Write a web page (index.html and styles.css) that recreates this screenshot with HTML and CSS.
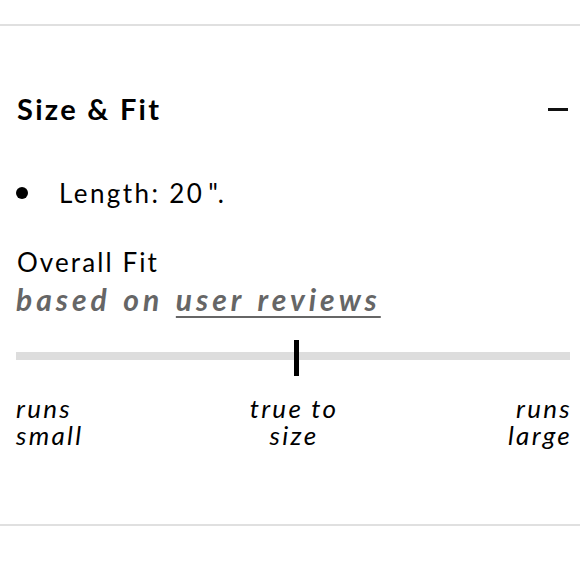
FILE: index.html
```html
<!DOCTYPE html>
<html>
<head>
<meta charset="utf-8">
<link rel="stylesheet" href="styles.css">
</head>
<body>
<div class="page">
  <section class="panel">
    <div class="header">
      <h2 class="title">Size &amp; Fit</h2>
      <span class="minus"></span>
    </div>
    <ul class="list">
      <li class="item"><span class="dot"></span><span>Length: 20<span class="q">".</span></span></li>
    </ul>
    <div class="fit">
      <div class="fit-title">Overall Fit</div>
      <div class="fit-sub">based on <span class="link">user reviews</span></div>
    </div>
    <div class="slider">
      <div class="track"></div>
      <div class="marker"></div>
    </div>
    <div class="labels">
      <div class="label left">runs<br>small</div>
      <div class="label mid">true to<br>size</div>
      <div class="label right">runs<br>large</div>
    </div>
  </section>
</div>
</body>
</html>
```
FILE: styles.css
```css
* { box-sizing: border-box; }
html, body { margin: 0; padding: 0; background: #fff; }
body { font-family: Lato, "Noto Sans", sans-serif; color: #000; }
.page { width: 580px; height: 580px; padding-top: 24px; }
.panel {
  border-top: 2px solid #e0e0e0;
  border-bottom: 2px solid #e0e0e0;
  height: 502px;
  padding: 0 10px 0 16px;
}
.header {
  display: flex;
  align-items: center;
  justify-content: space-between;
  margin-top: 65px;
  height: 36px;
}
.title { margin: 0 0 0 1px; font-size: 29px; line-height: 36px; font-weight: 700; letter-spacing: 2.3px; }
.minus { width: 20px; height: 3px; background: #111; margin-right: 2px; }
.list { list-style: none; margin: 50px 0 0; padding: 0; }
.item { display: flex; align-items: center; font-size: 26px; line-height: 32px; gap: 31px; letter-spacing: 2.4px; }
.q { margin-left: 4px; }
.dot { width: 12px; height: 12px; border-radius: 50%; background: #000; flex: none; }
.fit { margin-top: 37px; }
.fit-title { font-size: 26px; line-height: 32px; letter-spacing: 2.1px; padding-left: 1px; }
.fit-sub { margin-top: 5px; font-size: 30px; line-height: 32px; font-weight: 700; font-style: italic; color: #666666; letter-spacing: 4px; word-spacing: 2px; }
.link { text-decoration: underline; text-underline-offset: 5px; text-decoration-thickness: 2px; }
.slider { position: relative; height: 36px; margin-top: 25px; }
.track { position: absolute; left: 0; right: 0; top: 12px; height: 8px; background: #dddddd; }
.marker { position: absolute; left: 278px; top: 0; width: 5px; height: 36px; background: #000; }
.labels {
  display: grid;
  grid-template-columns: 1fr auto 1fr;
  margin: 19px -2px 0 0;
  font-size: 26px;
  font-style: italic;
  line-height: 27px;
  letter-spacing: 2.3px;
}
.label.mid { text-align: center; }
.label.right { text-align: right; }
```
